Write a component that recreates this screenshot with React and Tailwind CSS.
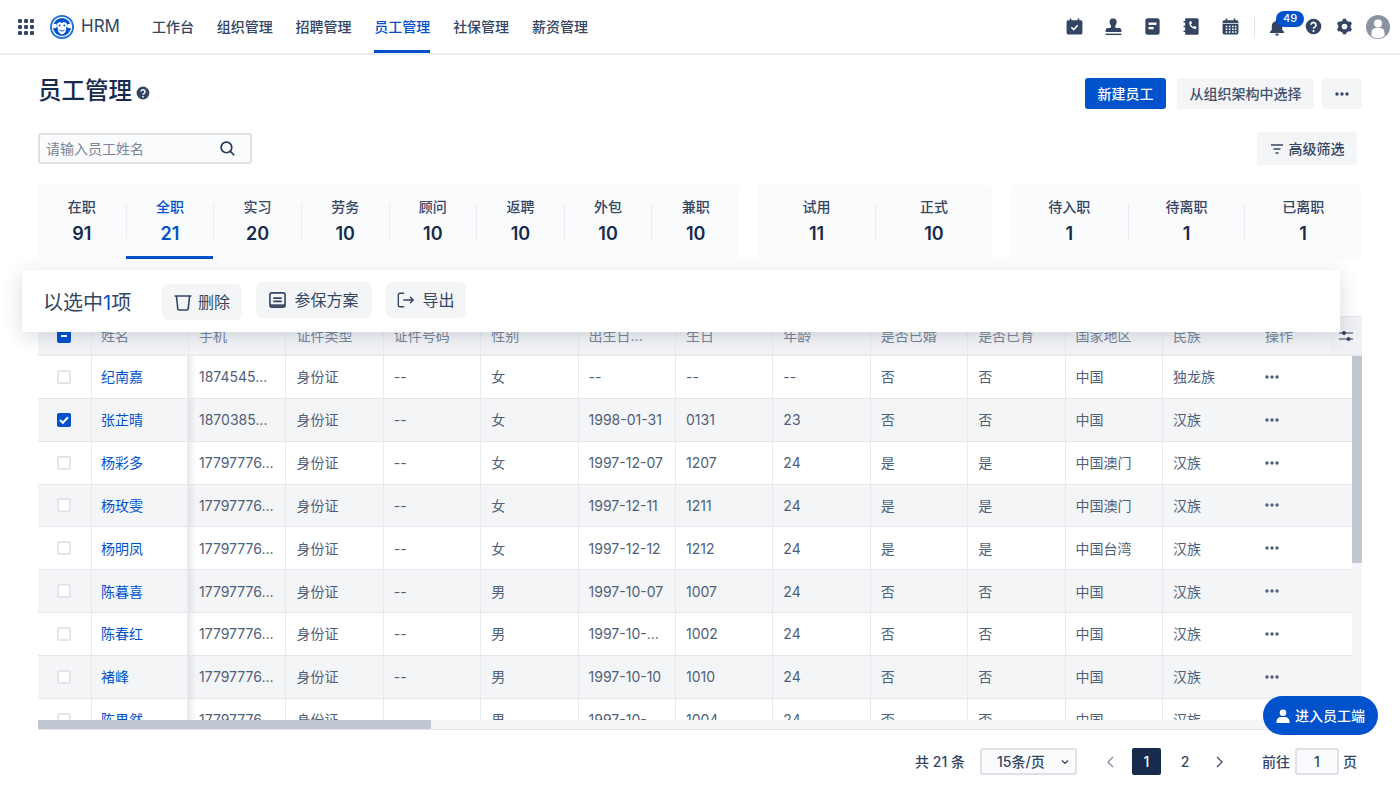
import React from "react";

const Svg = ({ s = 19, children, className = "" }) => (
  <svg width={s} height={s} viewBox="0 0 24 24" className={className}>{children}</svg>
);

const Dots = () => (
  <svg width="16" height="16" viewBox="0 0 16 16" fill="#344563">
    {[0, 6, 12].map((y) => [0, 6, 12].map((x) => <rect key={`${x}${y}`} x={x} y={y} width="4" height="4" rx="1.2" />))}
  </svg>
);

const Logo = () => (
  <svg width="24" height="24" viewBox="0 0 24 24">
    <circle cx="12" cy="12" r="12" fill="#1f6fdc" />
    <circle cx="12" cy="12" r="10.2" fill="#ffffff" />
    <circle cx="12" cy="12" r="9" fill="#0052cc" />
    <circle cx="4.8" cy="11" r="2.2" fill="#fff" />
    <circle cx="19.2" cy="11" r="2.2" fill="#fff" />
    <path d="M12 8.4c1-1.6 4.8-1.6 5 1.4.1 1.6-.8 2.4-.8 3.4 0 3.4-2 6-4.2 6s-4.2-2.6-4.2-6c0-1-.9-1.8-.8-3.4.2-3 4-3 5-1.4z" fill="#fff" />
    <circle cx="9.6" cy="10.6" r="1" fill="#0052cc" />
    <circle cx="14.4" cy="10.6" r="1" fill="#0052cc" />
    <path d="M9.5 15.2c1.5 1 3.5 1 5 0" stroke="#0052cc" strokeWidth="1" fill="none" />
  </svg>
);

const CalCheck = () => (
  <Svg>
    <path d="M4 4h2V2h2v2h8V2h2v2h2a2 2 0 0 1 2 2v14a2 2 0 0 1-2 2H4a2 2 0 0 1-2-2V6a2 2 0 0 1 2-2z" fill="#344563" />
    <path d="M8 13l3 3 5-5.5" stroke="#fff" strokeWidth="2" fill="none" />
  </Svg>
);
const Stamp = () => (
  <Svg>
    <path d="M12 1.5a5 5 0 0 0-5 5c0 2.2 1.6 3.3 1.9 5 .1 1-.2 2-.9 2.5H5a3 3 0 0 0-3 3V19h20v-2a3 3 0 0 0-3-3h-4c-.7-.5-1-1.500-.9-2.500.3-1.700 1.900-2.800 1.900-5a5 5 0 0 0-5-5z" fill="#344563" />
    <rect x="2" y="21" width="20" height="1.800" fill="#344563" />
  </Svg>
);
const Note = () => (
  <Svg>
    <rect x="3" y="1.500" width="18" height="21" rx="3" fill="#344563" />
    <rect x="7" y="7" width="10" height="3" fill="#fff" />
    <rect x="7" y="12.500" width="6.500" height="3" fill="#fff" />
  </Svg>
);
const PhoneBook = () => (
  <Svg>
    <path d="M4 1.500h15a2 2 0 0 1 2 2v17a2 2 0 0 1-2 2H4z" fill="#344563" />
    <path d="M2 5h3v2H2zM2 11h3v2H2zM2 17h3v2H2z" fill="#344563" />
    <path d="M9.200 5.500l2.300-.5 1.200 3-1.500 1.200c.5 1.600 1.400 2.600 2.900 3.300l1.300-1.400 3 1.400-.6 2.300c-4.500 1.500-10.500-4.300-8.100-9.300z" fill="#fff" />
  </Svg>
);
const Cal = () => (
  <Svg>
    <path d="M4 4h2V2h2v2h8V2h2v2h2a2 2 0 0 1 2 2v14a2 2 0 0 1-2 2H4a2 2 0 0 1-2-2V6a2 2 0 0 1 2-2z" fill="#344563" />
    <rect x="2" y="7.500" width="20" height="1" fill="#fff" />
    {[11, 14.500, 18].map((y) => [6, 10, 14, 17.500].map((x) => <rect key={`${x}${y}`} x={x} y={y} width="2" height="2" fill="#fff" />))}
  </Svg>
);
const Bell = () => (
  <Svg s={18}>
    <path d="M12 2a2 2 0 0 1 2 2v.4A7 7 0 0 1 19 11v5l2.500 2.500V20h-19v-1.500L5 16v-5a7 7 0 0 1 5-6.600V4a2 2 0 0 1 2-2zM9.500 21h5a2.500 2.500 0 0 1-5 0z" fill="#344563" />
  </Svg>
);
const Help = ({ s = 18 }) => (
  <Svg s={s}>
    <circle cx="12" cy="12" r="11" fill="#344563" />
    <path d="M8.500 9.500A3.500 3.500 0 1 1 13.500 13c-1 .6-1.500 1.200-1.500 2.200" stroke="#fff" strokeWidth="2.400" fill="none" />
    <circle cx="12" cy="18.300" r="1.500" fill="#fff" />
  </Svg>
);
const Gear = () => (
  <Svg s={17}>
    <circle cx="12" cy="12" r="6.500" fill="none" stroke="#344563" strokeWidth="5" />
    {[0, 60, 120, 180, 240, 300].map((a) => (
      <rect key={a} x="9.500" y="1" width="5" height="5" rx="1" fill="#344563" transform={`rotate(${a} 12 12)`} />
    ))}
  </Svg>
);
const Avatar = () => (
  <svg width="24" height="24" viewBox="0 0 24 24">
    <circle cx="12" cy="12" r="12" fill="#8993a4" />
    <circle cx="12" cy="8.500" r="4" fill="#fff" />
    <path d="M5.500 21v-3.500a4.500 4.500 0 0 1 4.500-4.500h4a4.500 4.500 0 0 1 4.500 4.500V21a10.500 10.500 0 0 1-13 0z" fill="#fff" />
  </svg>
);
const Search = () => (
  <svg width="17" height="17" viewBox="0 0 24 24" fill="none" stroke="#253858" strokeWidth="2.400">
    <circle cx="10.500" cy="10.500" r="7.500" /><path d="M16 16l5.500 5.500" />
  </svg>
);
const More = ({ c = "#344563" }) => (
  <svg width="14" height="4" viewBox="0 0 14 4" fill={c}>
    <circle cx="2" cy="2" r="1.700" /><circle cx="7" cy="2" r="1.700" /><circle cx="12" cy="2" r="1.700" />
  </svg>
);
const Filter = () => (
  <svg width="14" height="10" viewBox="0 0 14 10" stroke="#344563" strokeWidth="1.300">
    <path d="M1 1h12M3.500 5h7M5.500 9h3" />
  </svg>
);
const Trash = () => (
  <svg width="18" height="20" viewBox="0 0 18 20" fill="none" stroke="#344563" strokeWidth="1.600">
    <path d="M0.500 4h17M2.500 4.500l1.300 12.700a1 1 0 0 0 1 .8h8.400a1 1 0 0 0 1-.8l1.300-12.700" />
  </svg>
);
const Plan = () => (
  <svg width="17" height="18" viewBox="0 0 18 18" fill="none" stroke="#344563" strokeWidth="1.700">
    <rect x="1" y="1.500" width="16" height="15" rx="2" /><path d="M4.500 7h9M4.500 10.500h9" /><path d="M1 14.800h16" strokeWidth="2.400" />
  </svg>
);
const Export = () => (
  <svg width="18" height="18" viewBox="0 0 20 18" fill="none" stroke="#344563" strokeWidth="1.500">
    <path d="M8 1.500H3a1.500 1.500 0 0 0-1.500 1.500v12A1.500 1.500 0 0 0 3 16.500h5M7 9h11M14.500 5.500L18 9l-3.500 3.500" />
  </svg>
);
const Sliders = () => (
  <svg width="14" height="12" viewBox="0 0 14 12" fill="#344563" stroke="#344563">
    <path d="M0 3h14M0 9h14" strokeWidth="1.100" />
    <circle cx="5" cy="3" r="1.600" /><circle cx="9.500" cy="9" r="1.600" />
  </svg>
);
const Person = () => (
  <svg width="14" height="14" viewBox="0 0 14 14" fill="#fff">
    <circle cx="7" cy="3.800" r="3.300" /><path d="M0.500 14v-1.500A4.500 4.500 0 0 1 5 8h4a4.500 4.500 0 0 1 4.500 4.500V14z" />
  </svg>
);
const Chev = ({ d, c = "#344563" }) => (
  <svg width="10" height="12" viewBox="0 0 10 12" fill="none" stroke={c} strokeWidth="1.200">
    <path d={d} />
  </svg>
);

const Check = ({ state }) => {
  if (state === "on")
    return (
      <span className="flex h-[14px] w-[14px] items-center justify-center rounded-[2px] bg-[#0052cc]">
        <svg width="10" height="8" viewBox="0 0 10 8" fill="none" stroke="#fff" strokeWidth="2"><path d="M1 4l2.800 2.800L9 1.200" /></svg>
      </span>
    );
  if (state === "mid")
    return (
      <span className="flex h-[14px] w-[14px] items-center justify-center rounded-[2px] bg-[#0052cc]">
        <span className="h-[2px] w-[6px] bg-white" />
      </span>
    );
  return <span className="h-[14px] w-[14px] rounded-[2px] border-2 border-[#e4e6eb] bg-white" />;
};

const groups = [
  { w: "w-[701px]", items: [["在职", "91"], ["全职", "21", true], ["实习", "20"], ["劳务", "10"], ["顾问", "10"], ["返聘", "10"], ["外包", "10"], ["兼职", "10"]] },
  { w: "w-[234px]", items: [["试用", "11"], ["正式", "10"]] },
  { w: "w-[350px]", items: [["待入职", "1"], ["待离职", "1"], ["已离职", "1"]] },
];

const heads = ["姓名", "手机", "证件类型", "证件号码", "性别", "出生日...", "生日", "年龄", "是否已婚", "是否已育", "国家地区"];
const rows = [
  ["纪南嘉", "1874545...", "女", "--", "--", "--", "否", "否", "中国", "独龙族"],
  ["张芷晴", "1870385...", "女", "1998-01-31", "0131", "23", "否", "否", "中国", "汉族"],
  ["杨彩多", "17797776...", "女", "1997-12-07", "1207", "24", "是", "是", "中国澳门", "汉族"],
  ["杨玫雯", "17797776...", "女", "1997-12-11", "1211", "24", "是", "是", "中国澳门", "汉族"],
  ["杨明凤", "17797776...", "女", "1997-12-12", "1212", "24", "是", "是", "中国台湾", "汉族"],
  ["陈暮喜", "17797776...", "男", "1997-10-07", "1007", "24", "否", "否", "中国", "汉族"],
  ["陈春红", "17797776...", "男", "1997-10-...", "1002", "24", "否", "否", "中国", "汉族"],
  ["褚峰", "17797776...", "男", "1997-10-10", "1010", "24", "否", "否", "中国", "汉族"],
  ["陈果然", "17797776...", "男", "1997-10-...", "1004", "24", "否", "否", "中国", "汉族"],
];

const gridCols = "grid grid-cols-[54px_97px_97.4px_97.4px_97.4px_97.4px_97.4px_97.4px_97.4px_97.4px_97.4px_97.4px_92px_1fr]";
const cell = "flex items-center overflow-hidden whitespace-nowrap border-r border-[#e8eaee] pl-[10px]";

export default function App() {
  return (
    <div className="relative h-[792px] w-[1400px] overflow-hidden bg-white text-[14px] text-[#344563] font-['Inter','Noto_Sans_CJK_SC',sans-serif]">
      {/* top bar */}
      <header className="flex h-[55px] items-center border-b-2 border-[#ebecf0] pl-[18px] pr-[10px]">
        <Dots />
        <span className="ml-[16px]"><Logo /></span>
        <span className="ml-[7px] text-[17px] text-[#344563]">HRM</span>
        <nav className="ml-[32px] flex h-full gap-[22.8px] font-medium">
          {["工作台", "组织管理", "招聘管理", "员工管理", "社保管理", "薪资管理"].map((t) => (
            <a key={t} className={`flex h-full items-center border-b-[3px] pt-[3px] ${t === "员工管理" ? "border-[#0052cc] text-[#0052cc]" : "border-transparent text-[#344563]"}`}>{t}</a>
          ))}
        </nav>
        <div className="ml-auto flex items-center">
          <span className="flex gap-[20px]"><CalCheck /><Stamp /><Note /><PhoneBook /><Cal /></span>
          <span className="ml-[14.5px] h-[20px] w-px bg-[#dfe1e6]" />
          <span className="relative ml-[13px]">
            <Bell />
            <span className="absolute left-[8px] top-[-7px] flex h-[16px] w-[28px] items-center justify-center rounded-full bg-[#0052cc] text-[11px] font-medium text-white">49</span>
          </span>
          <span className="ml-[18.5px]"><Help s={17} /></span>
          <span className="ml-[14px]"><Gear /></span>
          <span className="ml-[13.5px]"><Avatar /></span>
        </div>
      </header>

      <main className="px-[38px]">
        {/* title row */}
        <div className="mt-[23px] flex h-[31px] items-center">
          <h1 className="mb-[6px] text-[23.5px] font-medium leading-[31px] text-[#172b4d]">员工管理</h1>
          <span className="ml-[4px] mb-[1px]"><Help s={14} /></span>
          <button className="ml-auto flex h-[31px] w-[81px] items-center justify-center rounded-[3px] bg-[#0052cc] font-medium text-white">新建员工</button>
          <button className="ml-[11px] flex h-[31px] w-[137px] items-center justify-center rounded-[3px] bg-[#f4f5f7] font-medium text-[#42526e]">从组织架构中选择</button>
          <button className="ml-[8px] flex h-[31px] w-[40px] items-center justify-center rounded-[3px] bg-[#f4f5f7]"><More /></button>
        </div>

        {/* search row */}
        <div className="mt-[23px] flex h-[33px] items-center justify-between pr-[5px]">
          <div className="flex h-[31px] w-[214px] items-center justify-between rounded-[3px] border-2 border-[#dfe1e6] bg-[#fafbfc] pl-[6px] pr-[14px]">
            <span className="text-[#7a869a]">请输入员工姓名</span>
            <Search />
          </div>
          <button className="flex h-[33px] w-[100px] items-center justify-center gap-[5px] rounded-[3px] bg-[#f4f5f7] font-medium text-[#344563]"><Filter />高级筛选</button>
        </div>

        {/* stats */}
        <div className="mt-[20px] flex gap-[19px]">
          {groups.map((g, i) => (
            <div key={i} className={`flex h-[74px] rounded-[3px] bg-[#fafbfc] ${g.w}`}>
              {g.items.map(([label, n, on], j) => (
                <div key={label} className="flex flex-1 flex-col pt-[19px]">
                  <div className={`h-[35px] text-center ${j ? "border-l border-[#ebecf0]" : ""}`}>
                    <div className={`-mt-[7px] text-[14px] font-medium leading-[20px] ${on ? "text-[#0052cc]" : "text-[#344563]"}`}>{label}</div>
                    <div className={`mt-[7px] text-[18px] font-semibold leading-[20px] ${on ? "text-[#0052cc]" : "text-[#172b4d]"}`}>{n}</div>
                  </div>
                  <div className={`mt-auto h-[3px] ${on ? "bg-[#0052cc]" : ""}`} />
                </div>
              ))}
            </div>
          ))}
        </div>

        {/* table */}
        <div className="mt-[57px] w-[1324px]">
          <div className={`${gridCols} h-[40px] border-t border-[#e4e6eb] bg-[#f4f5f7] text-[#7a869a]`}>
            <div className={`${cell} justify-center !pl-0 pr-[2px] border-b-2 border-b-[#ebecf0]`}><Check state="mid" /></div>
            {heads.map((h, i) => <div key={h} className={`${cell} border-b-2 border-b-[#ebecf0] ${i === 0 ? "!pl-[9px]" : ""}`}>{h}</div>)}
            <div className="flex items-center border-b-2 border-[#ebecf0] pl-[10px]">民族</div>
            <div className="flex items-center justify-between border-b-2 border-[#ebecf0] pl-[10px]">
              <span>操作</span>
              <span className="flex h-full w-[32px] items-center justify-center bg-[#f0f1f4]"><Sliders /></span>
            </div>
          </div>
          <div className="flex h-[364px]">
            <div className="flex-1 overflow-hidden">
              {rows.map((r, i) => (
                <div key={r[0]} className={`${gridCols} h-[42.85px] border-b border-[#e4e6eb] text-[#505f79] ${i % 2 ? "bg-[#f4f5f7]" : "bg-white"}`}>
                  <div className={`${cell} justify-center !pl-0 pr-[2px]`}><Check state={i === 1 ? "on" : "off"} /></div>
                  <div className={`${cell} !pl-[9px] border-r-2 text-[#0052cc]`}>{r[0]}</div>
                  <div className={`${cell} bg-[linear-gradient(to_right,rgba(9,30,66,0.08),transparent_7px)]`}>{r[1]}</div>
                  <div className={cell}>身份证</div>
                  <div className={cell}>--</div>
                  <div className={cell}>{r[2]}</div>
                  <div className={cell}>{r[3]}</div>
                  <div className={cell}>{r[4]}</div>
                  <div className={cell}>{r[5]}</div>
                  <div className={cell}>{r[6]}</div>
                  <div className={cell}>{r[7]}</div>
                  <div className={cell}>{r[8]}</div>
                  <div className="flex items-center pl-[10px]">{r[9]}</div>
                  <div className="flex items-center pl-[10px]"><More c="#505f79" /></div>
                </div>
              ))}
            </div>
            <div className="h-full w-[10px] bg-[#f4f5f7]">
              <div className="h-[207px] bg-[#c1c7d0]" />
            </div>
          </div>
          <div className="h-[10px] border-b border-[#e4e6eb] bg-[#f4f5f7]">
            <div className="h-[9px] w-[393px] bg-[#c1c7d0]" />
          </div>
        </div>

        {/* pagination */}
        <div className="mt-[18px] flex h-[27px] items-center justify-end pr-[5px] font-medium">
          <span className="text-[#344563]">共 21 条</span>
          <span className="ml-[15px] flex h-[27px] w-[97px] items-center justify-between rounded-[3px] border-2 border-[#dfe1e6] bg-[#fafbfc] pl-[15px] pr-[5px] text-[#344563]">
            15条/页<Chev d="M2 4.500l3 3 3-3" />
          </span>
          <span className="ml-[29px]"><Chev d="M7 1L2 6l5 5" c="#7a869a" /></span>
          <span className="ml-[16px] flex h-[27px] w-[29px] items-center justify-center rounded-[2px] bg-[#172b4d] text-white">1</span>
          <span className="flex h-[27px] w-[48px] items-center justify-center text-[#344563]">2</span>
          <span className="ml-[5px]"><Chev d="M3 1l5 5-5 5" /></span>
          <span className="ml-[38px] text-[#344563]">前往</span>
          <span className="ml-[5px] flex h-[27px] w-[44px] items-center justify-center rounded-[3px] border-2 border-[#dfe1e6] bg-[#fafbfc]">1</span>
          <span className="ml-[4px] text-[#344563]">页</span>
        </div>
      </main>

      {/* selection bar overlay */}
      <div className="absolute left-[22px] top-[270px] flex h-[62px] w-[1318px] items-start bg-white pl-[21px] pt-[12px] shadow-[0_4px_20px_rgba(9,30,66,0.16)]">
        <span className="mt-[7px] w-[88px] whitespace-nowrap text-[20px] leading-[28px] text-[#344563]">以选中<span className="text-[#0052cc]">1</span>项</span>
        <button className="ml-[31px] mt-[2px] flex h-[36px] w-[80px] items-center justify-center gap-[6px] rounded-[6px] bg-[#f4f5f7] text-[16px]"><Trash />删除</button>
        <button className="ml-[14px] flex h-[36px] w-[116px] items-center justify-center gap-[8px] rounded-[6px] bg-[#f4f5f7] text-[16px]"><Plan />参保方案</button>
        <button className="ml-[14px] flex h-[36px] w-[80px] items-center justify-center gap-[7px] rounded-[6px] bg-[#f4f5f7] text-[16px]"><Export />导出</button>
      </div>

      {/* floating button */}
      <button className="absolute left-[1263px] top-[696px] flex h-[39px] w-[115px] items-center justify-center gap-[5px] rounded-full bg-[#0052cc] font-medium text-white"><Person />进入员工端</button>
    </div>
  );
}
